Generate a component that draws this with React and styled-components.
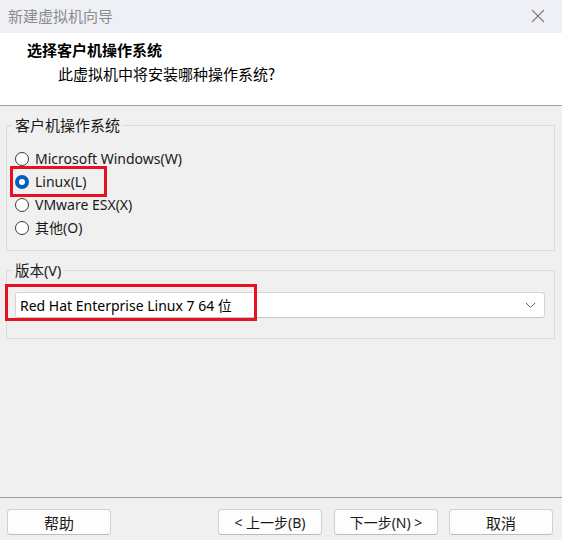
import React from "react";
import styled, { createGlobalStyle } from "styled-components";

const GlobalStyle = createGlobalStyle`
  html, body {
    margin: 0;
    padding: 0;
    background: #f0f0f0;
  }
  body {
    font-family: "Noto Sans", "Noto Sans CJK SC", sans-serif;
    font-size: 14px;
    color: #1a1a1a;
  }
`;

const osList = [
  { label: "Microsoft Windows(W)", checked: false },
  { label: "Linux(L)", checked: true, marked: true },
  { label: "VMware ESX(X)", checked: false },
  { label: "其他(O)", checked: false },
];

export default function App() {
  return (
    <>
      <GlobalStyle />
      <Window>
        <TitleBar>
          <TitleText>新建虚拟机向导</TitleText>
          <CloseIcon />
        </TitleBar>
        <Header>
          <HeaderTitle>选择客户机操作系统</HeaderTitle>
          <HeaderSub>此虚拟机中将安装哪种操作系统?</HeaderSub>
        </Header>
        <Body>
          <Group $padBottom={11}>
            <Legend $cjk>客户机操作系统</Legend>
            {osList.map((os) => (
              <RadioRow key={os.label}>
                <Radio $checked={os.checked} />
                <RadioLabel>{os.label}</RadioLabel>
                {os.marked && <Mark $l={-5} $t={-4} $w={97} $h={31} />}
              </RadioRow>
            ))}
          </Group>
          <Group $padBottom={20} $gapTop={9}>
            <Legend>版本(V)</Legend>
            <SelectWrap>
              <Select>
                <span>Red Hat Enterprise Linux 7 64 位</span>
                <Chevron />
              </Select>
              <Mark $l={-10} $t={-8} $w={252} $h={37} />
            </SelectWrap>
          </Group>
        </Body>
        <Footer>
          <Button $cjk>帮助</Button>
          <Spacer />
          <Button>&lt; 上一步(B)</Button>
          <Button>下一步(N) &gt;</Button>
          <Button $cjk $gapLeft={11}>取消</Button>
        </Footer>
      </Window>
    </>
  );
}

const CloseIcon = () => (
  <svg width="14" height="14" viewBox="0 0 14 14">
    <path d="M1 1 L13 13 M13 1 L1 13" stroke="#7a7a7a" strokeWidth="1.1" fill="none" />
  </svg>
);

const Chevron = () => (
  <svg width="11" height="7" viewBox="0 0 11 7">
    <path d="M1 1 L5.5 5.5 L10 1" stroke="#606060" strokeWidth="1" fill="none" />
  </svg>
);

// --- Styling section ---

const Window = styled.div`
  width: 562px;
  height: 540px;
  display: flex;
  flex-direction: column;
  background: #f0f0f0;
  overflow: hidden;
`;

const TitleBar = styled.div`
  height: 33px;
  flex: 0 0 33px;
  background: #eef0f5;
  display: flex;
  align-items: center;
  justify-content: space-between;
  padding: 0 17px 2px 8px;
  box-sizing: border-box;
`;

const TitleText = styled.div`
  color: #8c8c8c;
  font-size: 15px;
  font-family: "Noto Sans CJK SC", sans-serif;
`;

const Header = styled.div`
  height: 73px;
  flex: 0 0 73px;
  box-sizing: border-box;
  background: #ffffff;
  border-bottom: 1px solid #a0a0a0;
  padding: 7px 0 0 27px;
  display: flex;
  flex-direction: column;
  gap: 4px;
`;

const HeaderTitle = styled.div`
  font-family: "Noto Sans CJK SC", sans-serif;
  font-weight: bold;
  font-size: 15px;
  line-height: 20px;
  color: #000;
`;

const HeaderSub = styled.div`
  font-family: "Noto Sans CJK SC", sans-serif;
  font-size: 15px;
  line-height: 20px;
  padding-left: 31px;
  color: #000;
`;

const Body = styled.div`
  flex: 1;
  padding: 9px 7px 0 6px;
  display: flex;
  flex-direction: column;
`;

const Group = styled.fieldset`
  margin: ${(p) => p.$gapTop || 0}px 0 0 0;
  border: 1px solid #dcdcdc;
  padding: 12px 8px ${(p) => p.$padBottom}px 8px;
  min-width: 0;
`;

const Legend = styled.legend`
  padding: 0 2px;
  margin-left: -2px;
  line-height: 20px;
  font-size: ${(p) => (p.$cjk ? 15 : 14.5)}px;
  color: #1a1a1a;
`;

const RadioRow = styled.div`
  position: relative;
  height: 23px;
  display: flex;
  align-items: center;
  gap: 6px;
`;

const Radio = styled.span`
  width: 14px;
  height: 14px;
  box-sizing: border-box;
  border-radius: 50%;
  border: ${(p) => (p.$checked ? "none" : "1px solid #3a3a3a")};
  background: ${(p) => (p.$checked ? "#005fb8" : "#fff")};
  display: flex;
  align-items: center;
  justify-content: center;
  &::after {
    content: "";
    display: ${(p) => (p.$checked ? "block" : "none")};
    width: 6px;
    height: 6px;
    border-radius: 50%;
    background: #fff;
  }
`;

const RadioLabel = styled.span`
  font-size: 14px;
  line-height: 20px;
  color: #1a1a1a;
`;

const Mark = styled.div`
  position: absolute;
  left: ${(p) => p.$l}px;
  top: ${(p) => p.$t}px;
  width: ${(p) => p.$w}px;
  height: ${(p) => p.$h}px;
  border: 3px solid #e81123;
  box-sizing: border-box;
  pointer-events: none;
`;

const SelectWrap = styled.div`
  position: relative;
  margin-right: 1px;
`;

const Select = styled.div`
  height: 26px;
  box-sizing: border-box;
  background: #ffffff;
  border: 1px solid #d4d4d4;
  border-bottom-color: #c4c4c4;
  border-radius: 3px;
  display: flex;
  align-items: center;
  justify-content: space-between;
  padding: 0 8px 0 4px;
  font-size: 14px;
  color: #000;
`;

const Footer = styled.div`
  flex: 0 0 43px;
  box-sizing: border-box;
  border-top: 1px solid #a0a0a0;
  display: flex;
  align-items: flex-start;
  gap: 12px;
  padding: 11px 9px 0 7px;
`;

const Spacer = styled.div`
  flex: 1;
`;

const Button = styled.button`
  width: 104px;
  height: 26px;
  background: #fdfdfd;
  border: 1px solid #d0d0d0;
  border-bottom-color: #bdbdbd;
  border-radius: 4px;
  font-family: "Noto Sans", "Noto Sans CJK SC", sans-serif;
  font-size: ${(p) => (p.$cjk ? 15 : 14)}px;
  color: #1a1a1a;
  padding: 0;
  margin-left: ${(p) => (p.$gapLeft ? p.$gapLeft - 12 : 0)}px;
`;
